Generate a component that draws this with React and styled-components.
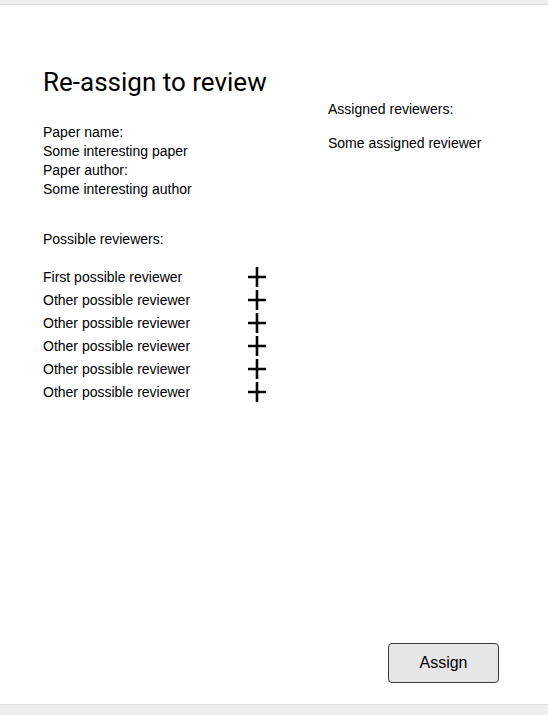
import React from 'react';
import styled, { createGlobalStyle } from 'styled-components';

const GlobalStyle = createGlobalStyle`
  html, body {
    margin: 0;
    padding: 0;
    background: #eeeeee;
  }
  body {
    padding: 4px 0 10px;
    font-family: "Liberation Sans", Arial, sans-serif;
    color: #000;
  }
`;

const possible = [
  'First possible reviewer',
  'Other possible reviewer',
  'Other possible reviewer',
  'Other possible reviewer',
  'Other possible reviewer',
  'Other possible reviewer',
];

function PlusIcon() {
  return (
    <svg width="18" height="20" viewBox="0 0 18 20">
      <path d="M9 0v20M0 10h18" stroke="#000" strokeWidth="2.6" fill="none" />
    </svg>
  );
}

function App() {
  return (
    <>
      <GlobalStyle />
      <Card>
        <Content>
          <LeftColumn>
            <Title>Re-assign to review</Title>
            <Info>
              <Line>Paper name:</Line>
              <Line>Some interesting paper</Line>
              <Line>Paper author:</Line>
              <Line>Some interesting author</Line>
            </Info>
            <SectionLabel>Possible reviewers:</SectionLabel>
            <ReviewerList>
              {possible.map((name, i) => (
                <ReviewerRow key={i}>
                  <span>{name}</span>
                  <AddButton aria-label="add reviewer">
                    <PlusIcon />
                  </AddButton>
                </ReviewerRow>
              ))}
            </ReviewerList>
          </LeftColumn>
          <RightColumn>
            <Line>Assigned reviewers:</Line>
            <Assigned>Some assigned reviewer</Assigned>
          </RightColumn>
        </Content>
        <Footer>
          <AssignButton>Assign</AssignButton>
        </Footer>
      </Card>
    </>
  );
}

export default App;

const Card = styled.div`
  box-sizing: border-box;
  height: 701px;
  background: #fff;
  border-top: 1px solid #dcdcdc;
  border-bottom: 1px solid #dcdcdc;
  display: flex;
  flex-direction: column;
  padding: 62px 49px 21px 43px;
`;

const Content = styled.div`
  display: flex;
  align-items: flex-start;
`;

const LeftColumn = styled.div`
  width: 285px;
  display: flex;
  flex-direction: column;
`;

const RightColumn = styled.div`
  padding-top: 33px;
  display: flex;
  flex-direction: column;
`;

const Title = styled.h1`
  margin: 0 0 26px;
  font-family: Roboto, "Liberation Sans", sans-serif;
  font-weight: 400;
  font-size: 26px;
  line-height: 30px;
`;

const Info = styled.div`
  display: flex;
  flex-direction: column;
`;

const Line = styled.div`
  font-size: 14px;
  line-height: 19px;
`;

const SectionLabel = styled(Line)`
  margin-top: 31px;
`;

const Assigned = styled(Line)`
  margin-top: 15px;
`;

const ReviewerList = styled.div`
  margin-top: 16px;
  display: flex;
  flex-direction: column;
`;

const ReviewerRow = styled.div`
  display: grid;
  grid-template-columns: 205px 18px;
  align-items: center;
  height: 23px;
  font-size: 14px;
`;

const AddButton = styled.span`
  display: flex;
  align-items: center;
  justify-content: center;
  cursor: pointer;
`;

const Footer = styled.div`
  margin-top: auto;
  display: flex;
  justify-content: flex-end;
`;

const AssignButton = styled.button`
  width: 111px;
  height: 40px;
  background: #e6e6e6;
  border: 1px solid #3a3a3a;
  border-radius: 4px;
  font-family: "Liberation Sans", Arial, sans-serif;
  font-size: 16px;
  color: #000;
  cursor: pointer;
`;
